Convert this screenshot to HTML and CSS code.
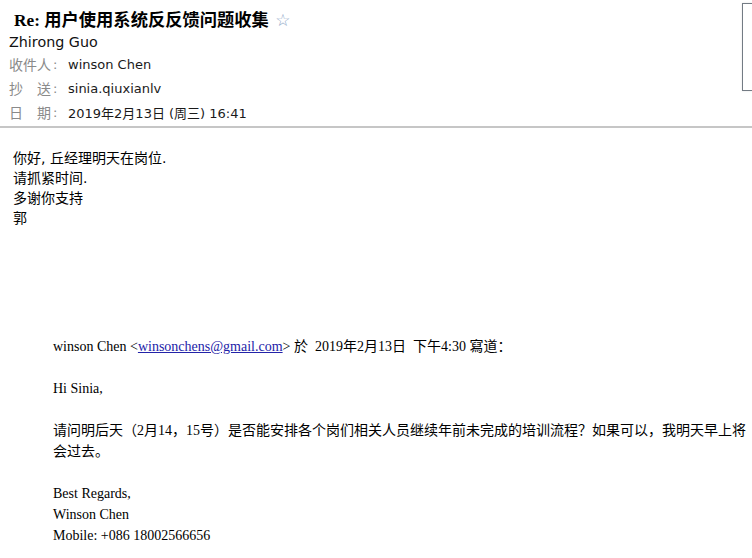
FILE: index.html
```html
<!DOCTYPE html>
<html lang="zh-cn">
<head>
	<meta charset="utf-8"/>
	<title>Re: 用户使用系统反反馈问题收集</title>
	<link rel="stylesheet" href="styles.css">
</head>
<body>

<div class="mail">
	<!--邮件头-->
	<div class="mail-head">
		<div class="mail-head__main">
			<h1 class="mail-subject"><span class="mail-subject__re">Re:</span> 用户使用系统反反馈问题收集 <span class="mail-subject__star">☆</span></h1>
			<div class="mail-from">Zhirong Guo</div>
			<div class="mail-row">
				<span class="mail-row__label">收件人</span><span class="mail-row__colon">:</span>
				<span class="mail-row__value">winson Chen</span>
			</div>
			<div class="mail-row">
				<span class="mail-row__label">抄送</span><span class="mail-row__colon">:</span>
				<span class="mail-row__value">sinia.qiuxianlv</span>
			</div>
			<div class="mail-row">
				<span class="mail-row__label">日期</span><span class="mail-row__colon">:</span>
				<span class="mail-row__value">2019年2月13日 (周三) 16:41</span>
			</div>
		</div>
		<div class="mail-avatar"></div>
	</div>

	<!--正文-->
	<div class="mail-body">
		<div class="mail-body__text">
			<div>你好, 丘经理明天在岗位.</div>
			<div>请抓紧时间.</div>
			<div>多谢你支持</div>
			<div>郭</div>
		</div>

		<div class="mail-quote">
			<p>winson Chen &lt;<a class="mail-quote__link" href="javascript:void(0);">winsonchens@gmail.com</a>&gt; 於&nbsp; 2019年2月13日&nbsp; 下午4:30 寫道：</p>
			<p>Hi Sinia,</p>
			<p>请问明后天（2月14，15号）是否能安排各个岗们相关人员继续年前未完成的培训流程？如果可以，我明天早上将会过去。</p>
			<p>Best Regards,<br/>Winson Chen<br/>Mobile: +086 18002566656</p>
		</div>
	</div>
</div>

</body>
</html>
```

FILE: styles.css
```css
/*邮件阅读页*/
html,body{
	margin: 0;
	padding: 0;
	background: #fff;
	overflow: hidden;
}
.mail{
	color: #000;
	font-family: "DejaVu Sans", "Noto Sans CJK SC", sans-serif;
}

/*邮件头*/
.mail-head{
	display: flex;
	padding: 9px 0 2px 9px;
	border-bottom: 2px solid #c6c6c6;
}
.mail-head__main{
	flex: 1;
}
.mail-subject{
	margin: 0;
	padding-left: 5px;
	font-family: "Liberation Serif", "Noto Sans CJK SC", serif;
	font-size: 17.3px;
	font-weight: bold;
	line-height: 22px;
}
.mail-subject__star{
	margin-left: 2px;
	font-family: "DejaVu Sans", sans-serif;
	font-weight: normal;
	font-size: 17px;
	color: #8fa8c8;
}
.mail-from{
	font-size: 14.3px;
	line-height: 20px;
	color: #111;
}
.mail-row{
	display: flex;
	align-items: center;
	height: 24px;
	font-size: 13px;
}
.mail-row__label{
	display: inline-block;
	width: 42px;
	font-size: 14px;
	color: #8a8a8a;
	text-align: justify;
	text-align-last: justify;
}
.mail-row__colon{
	width: 15px;
	padding-left: 2px;
	color: #8a8a8a;
}
.mail-row__value{
	color: #1a1a1a;
}
.mail-avatar{
	flex: none;
	width: 9px;
	height: 86px;
	margin-top: -6px;
	border: 1px solid #737b84;
	border-right: none;
	background: radial-gradient(ellipse 22px 30px at 22px 96px, #e2e2e2 0 60%, #fff 62%);
	box-shadow: 0 0 2px #e4e4e4;
}

/*正文*/
.mail-body{
	padding: 20px 0 0 13px;
}
.mail-body__text{
	font-size: 14px;
	line-height: 20px;
}
.mail-quote{
	margin-top: 108px;
	padding-left: 40px;
	font-family: "Liberation Serif", "Noto Sans CJK SC", serif;
	font-size: 14px;
	line-height: 21px;
}
.mail-quote p{
	margin: 0 0 21px;
}
.mail-quote__link{
	color: #2323a8;
	text-decoration: underline;
}
```
